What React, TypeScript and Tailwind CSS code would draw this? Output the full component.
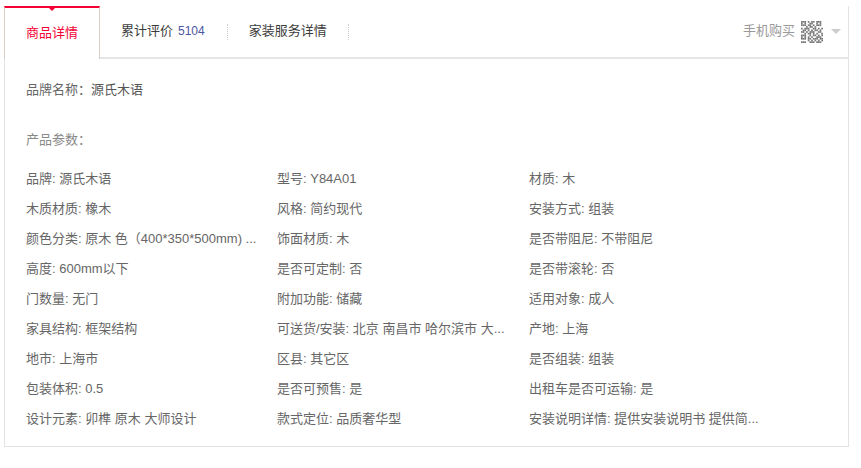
const rows = [
  ["品牌: 源氏木语", "型号: Y84A01", "材质: 木"],
  ["木质材质: 橡木", "风格: 简约现代", "安装方式: 组装"],
  ["颜色分类: 原木 色（400*350*500mm) ...", "饰面材质: 木", "是否带阻尼: 不带阻尼"],
  ["高度: 600mm以下", "是否可定制: 否", "是否带滚轮: 否"],
  ["门数量: 无门", "附加功能: 储藏", "适用对象: 成人"],
  ["家具结构: 框架结构", "可送货/安装: 北京 南昌市 哈尔滨市 大...", "产地: 上海"],
  ["地市: 上海市", "区县: 其它区", "是否组装: 组装"],
  ["包装体积: 0.5", "是否可预售: 是", "出租车是否可运输: 是"],
  ["设计元素: 卯榫 原木 大师设计", "款式定位: 品质奢华型", "安装说明详情: 提供安装说明书 提供简..."],
];

const qr = [
  "1110101101110",
  "1010011001010",
  "1110110101110",
  "0001011010000",
  "1011100110101",
  "0110101011010",
  "1101011100110",
  "0010110101001",
  "1110010110101",
  "1010101001110",
  "1110110111011",
  "0000101010101",
  "1110011101110",
];

function Qr() {
  return (
    <svg width="22" height="22" viewBox="0 0 13 13" fill="#777">
      {qr.flatMap((r, y) =>
        r.split("").map((c, x) => (c === "1" ? <rect key={`${x}-${y}`} x={x} y={y} width="1" height="1" /> : null))
      )}
    </svg>
  );
}

export default function App() {
  return (
    <div className="h-[468px] w-[861px] bg-white pl-[4px] pt-[6px] text-[13px] text-[#666] [font-family:'Liberation_Sans','Noto_Sans_CJK_SC',sans-serif]">
      <div className="h-[441px] w-[845px] border border-t-0 border-[#e3e3e3]">
        <div className="-ml-px -mr-px flex h-[53px] items-center border-b-2 border-[#e5e5e5]">
          <div className="relative -mb-[2px] flex h-[53px] w-[96px] items-center justify-center border-x border-t-2 border-x-[#d9cdc6] border-t-[#f40035] bg-white pb-[2px] text-[#f40035]">
            <span className="absolute -top-[2px] left-1/2 h-0 w-0 -translate-x-1/2 border-x-[5px] border-t-[5px] border-x-transparent border-t-[#f40035]" />
            商品详情
          </div>
          <div className="flex items-center pb-[1px] pl-[21px] pr-[22px] text-[#3c3c3c]">
            累计评价<span className="ml-[5px] text-[12px] text-[#4a55a2]">5104</span>
          </div>
          <div className="h-[16px] border-l border-dotted border-[#ccc]" />
          <div className="pb-[1px] pl-[21px] pr-[21px] text-[#3c3c3c]">家装服务详情</div>
          <div className="h-[16px] border-l border-dotted border-[#ccc]" />
          <div className="ml-auto flex items-center pr-[8px] text-[#999]">
            <span className="pb-[1px]">手机购买</span>
            <span className="ml-[6px]"><Qr /></span>
            <span className="ml-[8px] h-0 w-0 border-x-[5px] border-t-[5px] border-x-transparent border-t-[#ccc]" />
          </div>
        </div>
        <div className="pl-[21px] pt-[21px]">
          <div className="h-[20px] leading-[20px]">品牌名称：<span className="text-[#555]">源氏木语</span></div>
          <div className="mt-[30px] h-[20px] leading-[20px] text-[#888]">产品参数：</div>
          <div className="mt-[14px] grid grid-cols-[251px_252px_1fr]">
            {rows.flat().map((t, i) => (
              <div key={i} className="h-[30px] whitespace-nowrap leading-[30px]">{t}</div>
            ))}
          </div>
        </div>
      </div>
    </div>
  );
}
